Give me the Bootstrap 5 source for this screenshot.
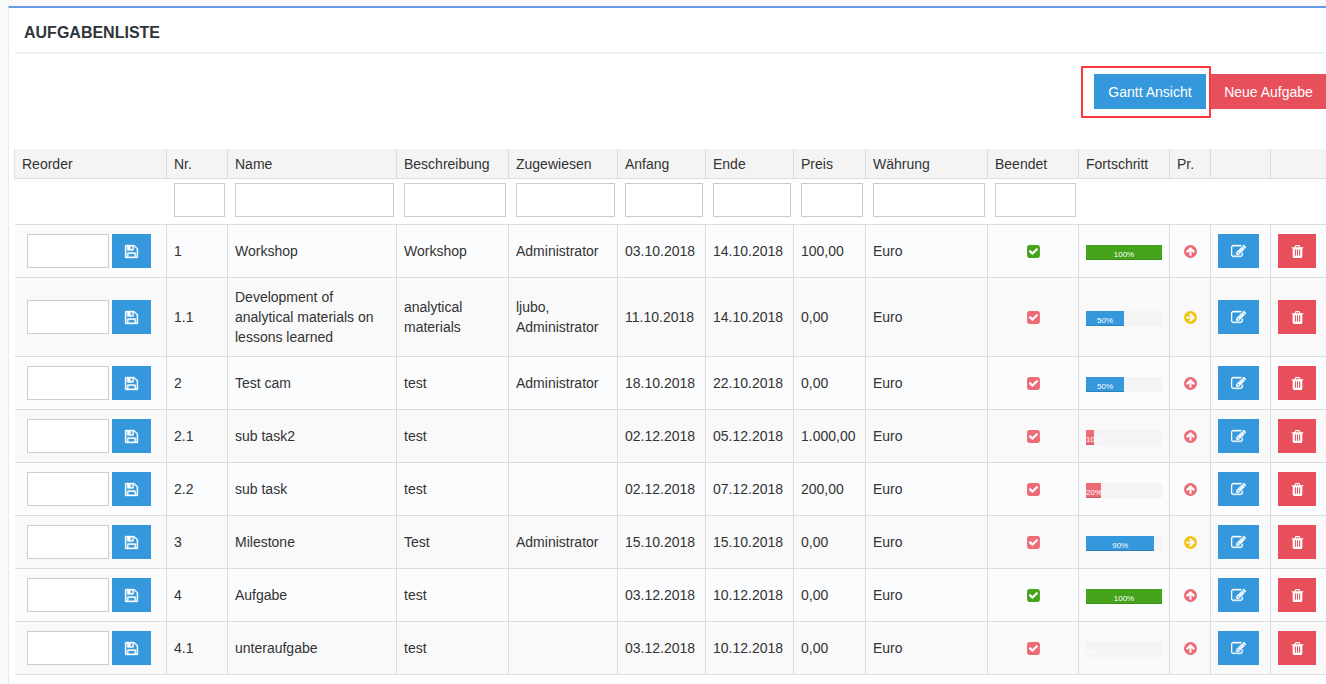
<!DOCTYPE html>
<html lang="de">
<head>
<meta charset="utf-8">
<meta name="viewport" content="width=device-width, initial-scale=1">
<title>Aufgabenliste</title>
<link href="https://cdn.jsdelivr.net/npm/bootstrap@5.3.0/dist/css/bootstrap.min.css" rel="stylesheet">
<style>
  body { background: #fafafa; color: #333; font-family: "Liberation Sans", Arial, sans-serif; font-size: 14px; line-height: 20px; }
  .portlet { margin: 6px 0 0 8px; padding-left: 6px; min-height: calc(100vh - 6px); background: #fff; border-top: 2px solid #659be0; border-left: 1px solid #e7ecf1; }
  .portlet-title { padding: 15px 9px 9px; border-bottom: 2px solid #eef1f5; }
  .portlet-title h1 { font-size: 16px; line-height: 20px; color: #2f353b; }
  .toolbar { padding: 12px 0 31px; }
  .highlight { border: 2px solid #fd3838; padding: 6px 3px 7px 11px; }
  .btn { --bs-btn-border-width: 0; --bs-btn-border-radius: 0; --bs-btn-font-size: 14px; --bs-btn-padding-x: 0; --bs-btn-padding-y: 0; height: 34px; line-height: 20px; }
  .btn-blue { --bs-btn-color: #fff; --bs-btn-bg: #3598dc; --bs-btn-hover-color: #fff; --bs-btn-hover-bg: #217ebd; }
  .btn-red { --bs-btn-color: #fff; --bs-btn-bg: #e7505a; --bs-btn-hover-color: #fff; --bs-btn-hover-bg: #e12330; }
  .toolbar .btn { height: 35px; }
  .btn-gantt { width: 112px; }
  .btn-new { width: 115px; margin-top: 8px; }
  .btn-save { width: 39px; }
  .btn-edit { width: 41px; }
  .btn-del { width: 38px; }
  .btn svg, .state svg { display: block; margin: 0 auto; width: 15px; height: 15px; fill: currentColor; }
  .btn-save svg, .btn-edit svg { stroke: currentColor; stroke-width: 50; }
  .tasks { table-layout: fixed; width: 100%; border-collapse: separate; border-spacing: 0; }
  .tasks th, .tasks td { padding: 9px 7px; border-bottom: 1px solid #ddd; border-right: 1px solid #ddd; vertical-align: middle; font-weight: 400; }
  .tasks tr > :last-child { border-right: 0; }
  .tasks .heads th { padding: 5px 0 4px 7px; background: #f4f4f4; white-space: nowrap; }
  .tasks .heads th:first-child { box-shadow: -1px 0 #ddd; }
  .tasks .filters td { padding: 4px 3px 7px 7px; border-right: 0; }
  .tasks tbody tr:nth-child(odd) { background: #fbfcfe; }
  .tasks tbody tr:nth-child(even) { background: #f9f9f9; }
  .tasks td.reorder { padding-left: 12px; }
  .tasks td.state { padding-left: 0; padding-right: 0; }
  .form-control { height: 34px; padding: 6px; border: 1px solid #ccc; border-radius: 0; font-size: 14px; line-height: 20px; }
  .reorder > div { gap: 3px; }
  .reorder .form-control { width: 82px; }
  .meter { width: 76px; max-width: 100%; height: 15px; margin-top: 3px; background: #f4f4f4; }
  .meter-fill { height: 15px; font-size: 8px; line-height: 19px; color: #fff; text-align: center; white-space: nowrap; box-shadow: inset 0 -1px rgba(0,0,0,.15); }
  .ok { color: #45a41c; } .bg-ok { background: #45a41c; }
  .open { color: #ed6b75; } .bg-low { background: #ed6b75; }
  .mid { color: #f1c40f; } .bg-mid { background: #3598dc; }
  .mid svg { transform: rotate(90deg); }
</style>
<script src="https://cdn.jsdelivr.net/npm/bootstrap@5.3.0/dist/js/bootstrap.bundle.min.js"></script>
</head>
<body>
<svg class="d-none" xmlns="http://www.w3.org/2000/svg">
  <symbol id="save" viewBox="0 0 1792 1792"><path d="M512 1536h768v-384h-768v384zm896 0h128v-896q0-14-10-38.500t-20-34.500l-281-281q-10-10-34-20t-39-10v416q0 40-28 68t-68 28h-576q-40 0-68-28t-28-68v-416h-128v1280h128v-416q0-40 28-68t68-28h832q40 0 68 28t28 68v416zm-384-928v-320q0-13-9.500-22.500t-22.500-9.500h-192q-13 0-22.500 9.500t-9.500 22.500v320q0 13 9.500 22.500t22.500 9.500h192q13 0 22.500-9.500t9.500-22.500zm640 32v928q0 40-28 68t-68 28h-1344q-40 0-68-28t-28-68v-1344q0-40 28-68t68-28h928q40 0 88 20t76 48l280 280q28 28 48 76t20 88z"/></symbol>
  <symbol id="edit" viewBox="0 0 1792 1792"><path d="M888 1184l116-116-152-152-116 116v56h96v96h56zm440-720q-16-16-33 1l-350 350q-17 17-1 33t33-1l350-350q17-17 1-33zm80 594v190q0 119-84.500 203.500t-203.500 84.500h-832q-119 0-203.500-84.500t-84.500-203.500v-832q0-119 84.500-203.500t203.500-84.500h832q63 0 117 25 15 7 18 23 3 17-9 29l-49 49q-14 14-32 8-23-6-45-6h-832q-66 0-113 47t-47 113v832q0 66 47 113t113 47h832q66 0 113-47t47-113v-126q0-13 9-22l64-64q15-15 35-7t20 29zm-96-738l288 288-672 672h-288v-288zm444 132l-92 92-288-288 92-92q28-28 68-28t68 28l152 152q28 28 28 68t-28 68z"/></symbol>
  <symbol id="trash" viewBox="0 0 1792 1792"><path d="M704 1376v-704q0-14-9-23t-23-9h-64q-14 0-23 9t-9 23v704q0 14 9 23t23 9h64q14 0 23-9t9-23zm256 0v-704q0-14-9-23t-23-9h-64q-14 0-23 9t-9 23v704q0 14 9 23t23 9h64q14 0 23-9t9-23zm256 0v-704q0-14-9-23t-23-9h-64q-14 0-23 9t-9 23v704q0 14 9 23t23 9h64q14 0 23-9t9-23zm-544-992h448l-48-117q-7-9-17-11h-317q-10 2-17 11zm928 32v64q0 14-9 23t-23 9h-96v948q0 83-47 143.500t-113 60.500h-832q-66 0-113-58.500t-47-141.500v-952h-96q-14 0-23-9t-9-23v-64q0-14 9-23t23-9h309l70-167q15-37 54-63t79-26h320q40 0 79 26t54 63l70 167h309q14 0 23 9t9 23z"/></symbol>
  <symbol id="arrow" viewBox="0 0 1792 1792"><path d="M1412 895q0-27-18-45l-362-362-91-91q-18-18-45-18t-45 18l-91 91-362 362q-18 18-18 45t18 45l91 91q18 18 45 18t45-18l189-189v502q0 26 19 45t45 19h128q26 0 45-19t19-45v-502l189 189q19 19 45 19t45-19l91-91q18-18 18-45zm252 1q0 209-103 385.500t-279.500 279.500-385.500 103-385.500-103-279.500-279.500-103-385.500 103-385.500 279.500-279.500 385.500-103 385.500 103 279.500 279.500 103 385.500z"/></symbol>
  <symbol id="check" viewBox="0 0 1792 1792"><path d="M813 1299l614-614q19-19 19-45t-19-45l-102-102q-19-19-45-19t-45 19l-467 467-211-211q-19-19-45-19t-45 19l-102 102q-19 19-19 45t19 45l358 358q19 19 45 19t45-19zm851-883v960q0 119-84.500 203.500t-203.500 84.500h-960q-119 0-203.500-84.500t-84.500-203.500v-960q0-119 84.500-203.500t203.500-84.500h960q119 0 203.500 84.500t84.500 203.500z"/></symbol>
</svg>

<main class="portlet">
  <header class="portlet-title"><h1 class="fw-bold m-0">AUFGABENLISTE</h1></header>
  <div class="toolbar d-flex justify-content-end align-items-start">
    <div class="highlight d-flex"><button type="button" class="btn btn-blue btn-gantt">Gantt Ansicht</button></div>
    <button type="button" class="btn btn-red btn-new">Neue Aufgabe</button>
  </div>
  <table class="tasks">
    <colgroup>
      <col width="152"><col width="61"><col width="169"><col width="112"><col width="109"><col width="88"><col width="88"><col width="72"><col width="122"><col width="91"><col width="91"><col width="41"><col width="60"><col width="55">
    </colgroup>
    <thead>
      <tr class="heads"><th>Reorder</th><th>Nr.</th><th>Name</th><th>Beschreibung</th><th>Zugewiesen</th><th>Anfang</th><th>Ende</th><th>Preis</th><th>Währung</th><th>Beendet</th><th>Fortschritt</th><th>Pr.</th><th></th><th></th></tr>
      <tr class="filters">
        <td></td>
        <td><input class="form-control" aria-label="Nr."></td>
        <td><input class="form-control" aria-label="Name"></td>
        <td><input class="form-control" aria-label="Beschreibung"></td>
        <td><input class="form-control" aria-label="Zugewiesen"></td>
        <td><input class="form-control" aria-label="Anfang"></td>
        <td><input class="form-control" aria-label="Ende"></td>
        <td><input class="form-control" aria-label="Preis"></td>
        <td><input class="form-control" aria-label="Währung"></td>
        <td><input class="form-control" aria-label="Beendet"></td>
        <td></td><td></td><td></td><td></td>
      </tr>
    </thead>
    <tbody id="rows"></tbody>
  </table>
</main>

<script>
  // nr, name, description, assigned, start, end, price, progress, priority
  const tasks = [
    ['1', 'Workshop', 'Workshop', 'Administrator', '03.10.2018', '14.10.2018', '100,00', 100, 'open'],
    ['1.1', 'Development of analytical materials on lessons learned', 'analytical materials', 'ljubo, Administrator', '11.10.2018', '14.10.2018', '0,00', 50, 'mid'],
    ['2', 'Test cam', 'test', 'Administrator', '18.10.2018', '22.10.2018', '0,00', 50, 'open'],
    ['2.1', 'sub task2', 'test', '', '02.12.2018', '05.12.2018', '1.000,00', 10, 'open'],
    ['2.2', 'sub task', 'test', '', '02.12.2018', '07.12.2018', '200,00', 20, 'open'],
    ['3', 'Milestone', 'Test', 'Administrator', '15.10.2018', '15.10.2018', '0,00', 90, 'mid'],
    ['4', 'Aufgabe', 'test', '', '03.12.2018', '10.12.2018', '0,00', 100, 'open'],
    ['4.1', 'unteraufgabe', 'test', '', '03.12.2018', '10.12.2018', '0,00', 0, 'open']
  ];
  const icon = id => `<svg aria-hidden="true"><use href="#${id}"/></svg>`;
  document.getElementById('rows').innerHTML = tasks.map(([nr, name, text, who, from, to, price, done, prio]) => `
    <tr>
      <td class="reorder"><div class="d-flex"><input class="form-control" aria-label="Position ${nr}"><button type="button" class="btn btn-blue btn-save" aria-label="Speichern">${icon('save')}</button></div></td>
      <td>${nr}</td><td>${name}</td><td>${text}</td><td>${who}</td><td>${from}</td><td>${to}</td><td>${price}</td><td>Euro</td>
      <td class="state ${done === 100 ? 'ok' : 'open'}">${icon('check')}</td>
      <td><div class="meter"><div class="meter-fill ${done === 100 ? 'bg-ok' : done >= 50 ? 'bg-mid' : 'bg-low'}" style="width:${done}%">${done}%</div></div></td>
      <td class="state ${prio}">${icon('arrow')}</td>
      <td><button type="button" class="btn btn-blue btn-edit d-block" aria-label="Bearbeiten">${icon('edit')}</button></td>
      <td><button type="button" class="btn btn-red btn-del d-block" aria-label="Löschen">${icon('trash')}</button></td>
    </tr>`).join('');
</script>
</body>
</html>
